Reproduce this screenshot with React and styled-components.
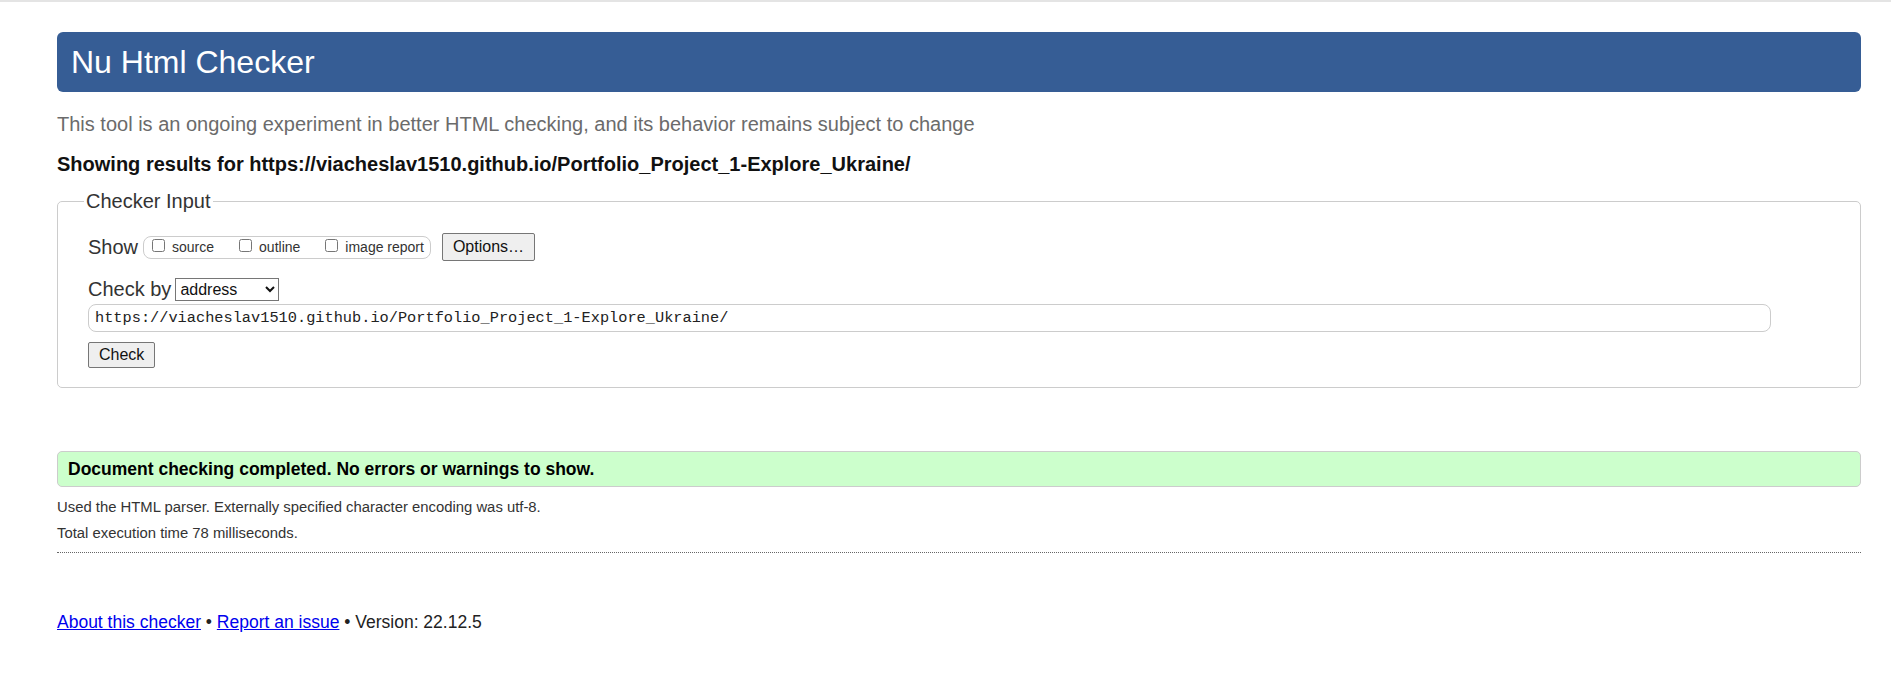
import React from "react";
import styled, { createGlobalStyle } from "styled-components";

const GlobalStyle = createGlobalStyle`
	html, body {
		margin: 0;
		padding: 0;
		background: #fff;
	}
	body {
		font-family: "Liberation Sans", Arial, sans-serif;
		color: #222;
		border-top: 2px solid #e4e4e4;
	}
`;

const App = () => {
	return (
		<>
			<GlobalStyle />
			<Page>
				<Header>Nu Html Checker</Header>
				<Subtitle>
					This tool is an ongoing experiment in better HTML checking, and its behavior remains subject to change
				</Subtitle>
				<Showing>Showing results for https://viacheslav1510.github.io/Portfolio_Project_1-Explore_Ukraine/</Showing>

				<Fieldset>
					<Legend>Checker Input</Legend>
					<Row $gap={5}>
						<Label>Show</Label>
						<CheckGroup>
							<CheckItem>
								<Box type="checkbox" readOnly />
								source
							</CheckItem>
							<CheckItem>
								<Box type="checkbox" readOnly />
								outline
							</CheckItem>
							<CheckItem>
								<Box type="checkbox" readOnly />
								image report
							</CheckItem>
						</CheckGroup>
						<Button $wide>Options…</Button>
					</Row>
					<Row $gap={4} $top={17}>
						<Label>Check by</Label>
						<Select defaultValue="address">
							<option value="address">address</option>
							<option value="file">file upload</option>
							<option value="text">text input</option>
						</Select>
					</Row>
					<UrlInput defaultValue="https://viacheslav1510.github.io/Portfolio_Project_1-Explore_Ukraine/" />
					<Row $top={10}>
						<Button>Check</Button>
					</Row>
				</Fieldset>

				<Success>Document checking completed. No errors or warnings to show.</Success>
				<Info $top={11}>Used the HTML parser. Externally specified character encoding was utf-8.</Info>
				<Info $top={8}>Total execution time 78 milliseconds.</Info>
				<Rule />

				<Footer>
					<a href="#about">About this checker</a> • <a href="#report">Report an issue</a> • Version: 22.12.5
				</Footer>
			</Page>
		</>
	);
};

const Page = styled.div`
	padding: 30px 30px 40px 57px;
`;

const Header = styled.h1`
	margin: 0;
	height: 60px;
	display: flex;
	align-items: center;
	padding-left: 14px;
	background: #365d95;
	color: #fff;
	font-size: 32px;
	font-weight: normal;
	border-radius: 6px;
`;

const Subtitle = styled.p`
	margin: 20px 0 0;
	font-size: 20px;
	line-height: 24px;
	color: #6b6b6b;
`;

const Showing = styled.h2`
	margin: 16px 0 0;
	font-size: 20px;
	line-height: 24px;
	font-weight: bold;
	color: #111;
`;

const Fieldset = styled.fieldset`
	margin: 14px 0 0;
	padding: 20px 30px 19px 30px;
	border: 1px solid #ccc;
	border-radius: 5px;
	min-width: 0;
`;

const Legend = styled.legend`
	padding: 0 2px;
	margin-left: -4px;
	font-size: 20px;
	line-height: 23px;
	color: #333;
`;

const Row = styled.div`
	display: flex;
	align-items: center;
	gap: ${(p) => (p.$gap ? p.$gap + "px" : "0")};
	margin-top: ${(p) => (p.$top ? p.$top + "px" : "0")};
`;

const Label = styled.span`
	font-size: 20px;
	color: #333;
	line-height: 23px;
`;

const CheckGroup = styled.div`
	display: flex;
	align-items: center;
	gap: 25px;
	height: 21px;
	padding: 0 6px 0 8px;
	border: 1px solid #ccc;
	border-radius: 8px;
`;

const CheckItem = styled.label`
	display: flex;
	align-items: center;
	font-size: 14px;
	color: #333;
	gap: 7px;
`;

const Box = styled.input`
	margin: 0;
	width: 13px;
	height: 13px;
	position: relative;
	top: -2px;
`;

const Button = styled.button`
	margin-left: ${(p) => (p.$wide ? "6px" : "0")};
	height: ${(p) => (p.$wide ? "28px" : "26px")};
	padding: 0 10px;
	font-family: "Liberation Sans", Arial, sans-serif;
	font-size: 16px;
	color: #111;
	background: #efefef;
	border: 1px solid #767676;
	border-radius: 2px;
`;

const Select = styled.select`
	width: 104px;
	height: 23px;
	font-family: "Liberation Sans", Arial, sans-serif;
	font-size: 16px;
	color: #111;
	background: #fff;
	border: 1px solid #767676;
	border-radius: 0;
`;

const UrlInput = styled.input`
	display: block;
	box-sizing: border-box;
	margin-top: 3px;
	width: calc(100% - 59px);
	height: 28px;
	padding: 0 6px;
	font-family: "Liberation Mono", "DejaVu Sans Mono", monospace;
	font-size: 15.3px;
	color: #222;
	border: 1px solid #ccc;
	border-radius: 8px;
	outline: none;
`;

const Success = styled.div`
	margin-top: 63px;
	height: 36px;
	box-sizing: border-box;
	display: flex;
	align-items: center;
	padding-left: 10px;
	background: #ccffcc;
	border: 1px solid #ccc;
	border-radius: 5px;
	font-size: 17.5px;
	font-weight: bold;
	color: #000;
`;

const Info = styled.p`
	margin: ${(p) => p.$top}px 0 0;
	font-size: 14.85px;
	line-height: 18px;
	color: #333;
`;

const Rule = styled.hr`
	margin: 10px 0 0;
	border: 0;
	border-top: 1px dotted #666;
`;

const Footer = styled.p`
	margin: 59px 0 0;
	font-size: 17.5px;
	line-height: 20px;
	color: #222;

	a {
		color: #0000ee;
	}
`;

export default App;
